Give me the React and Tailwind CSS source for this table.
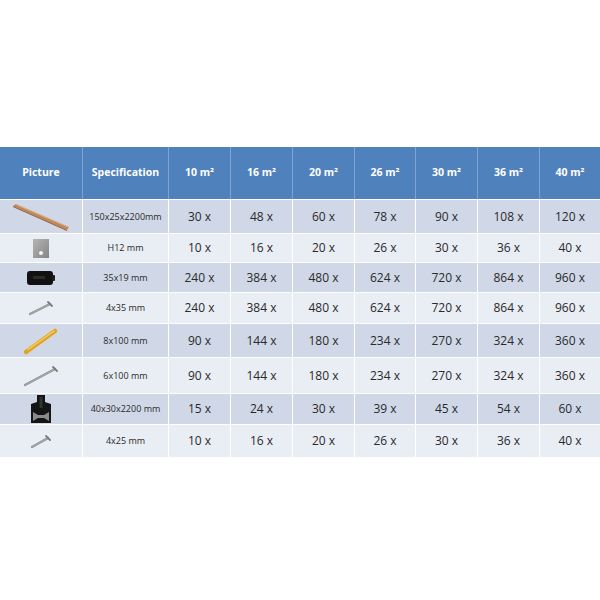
import React from "react";

const cols = ["10 m²", "16 m²", "20 m²", "26 m²", "30 m²", "36 m²", "40 m²"];

const Plank = () => (
  <svg width="58" height="28" viewBox="0 0 58 28">
    <polygon points="1,3 4,1 57,24 55,27" fill="#c28656" />
    <polygon points="4,1 57,24 57,25 4,2" fill="#deb088" />
    <polygon points="1,3 55,27 55,28 1,4" fill="#8a5a33" />
  </svg>
);

const Bracket = () => (
  <svg width="18" height="21" viewBox="0 0 18 21">
    <defs>
      <linearGradient id="br" x1="0" y1="0" x2="1" y2="1">
        <stop offset="0" stopColor="#b5b5b5" />
        <stop offset="1" stopColor="#858585" />
      </linearGradient>
    </defs>
    <rect x="1" y="1" width="16" height="19" fill="url(#br)" />
    <circle cx="9" cy="15" r="2" fill="#f4f4f4" />
  </svg>
);

const Clip = () => (
  <svg width="30" height="16" viewBox="0 0 30 16">
    <rect x="1" y="1" width="26" height="14" rx="3" fill="#111" />
    <rect x="26" y="5" width="3" height="6" rx="1" fill="#1d1d1d" />
    <rect x="7" y="6" width="12" height="3" fill="#2a2a2a" />
  </svg>
);

const Screw = ({ w = 24, h = 14 }) => (
  <svg width={w + 4} height={h + 4} viewBox={`0 0 ${w + 4} ${h + 4}`}>
    <line x1="2" y1={h + 2} x2={w} y2="4" stroke="#8c8c8c" strokeWidth="2.2" strokeLinecap="round" />
    <line x1="2" y1={h + 2} x2={w} y2="4" stroke="#b8b8b8" strokeWidth="0.8" strokeLinecap="round" />
    <line x1={w - 2} y1="2" x2={w + 2} y2="6" stroke="#7a7a7a" strokeWidth="1.8" strokeLinecap="round" />
  </svg>
);

const Anchor = () => (
  <svg width="38" height="30" viewBox="0 0 38 30">
    <line x1="4" y1="26" x2="33" y2="5" stroke="#e2a424" strokeWidth="4.5" strokeLinecap="round" />
    <line x1="6" y1="23.5" x2="32" y2="5" stroke="#f7cf66" strokeWidth="1.4" strokeLinecap="round" />
  </svg>
);

const Profile = () => (
  <svg width="22" height="30" viewBox="0 0 22 30">
    <path d="M7 1 L15 1 L15 8 L21 10 L21 29 L1 29 L1 10 L7 8 Z" fill="#151515" />
    <path d="M3 18 L8 21 L14 21 L19 18 L19 27 L14 24 L8 24 L3 27 Z" fill="#8a8a8a" />
    <path d="M9.5 3 L12.5 3 L12.5 14 L9.5 14 Z" fill="#333" />
  </svg>
);

const rows = [
  { h: "h-[34px]", dark: true, icon: <Plank />, spec: "150x25x2200mm", v: [30, 48, 60, 78, 90, 108, 120] },
  { h: "h-[29px]", dark: false, icon: <Bracket />, spec: "H12 mm", v: [10, 16, 20, 26, 30, 36, 40] },
  { h: "h-[30px]", dark: true, icon: <Clip />, spec: "35x19 mm", v: [240, 384, 480, 624, 720, 864, 960] },
  { h: "h-[31px]", dark: false, icon: <Screw w={22} h={12} />, spec: "4x35 mm", v: [240, 384, 480, 624, 720, 864, 960] },
  { h: "h-[34px]", dark: true, icon: <Anchor />, spec: "8x100 mm", v: [90, 144, 180, 234, 270, 324, 360] },
  { h: "h-[36px]", dark: false, icon: <Screw w={32} h={18} />, spec: "6x100 mm", v: [90, 144, 180, 234, 270, 324, 360] },
  { h: "h-[31px]", dark: true, icon: <Profile />, spec: "40x30x2200 mm", v: [15, 24, 30, 39, 45, 54, 60] },
  { h: "h-[33px]", dark: false, icon: <Screw w={18} h={11} />, spec: "4x25 mm", v: [10, 16, 20, 26, 30, 36, 40] },
];

const grid = "grid grid-cols-[83px_86px_62px_62px_62px_61px_62px_62px_60px]";

export default function App() {
  return (
    <div className="w-[600px] h-[600px] bg-white pt-[147px] font-['Open_Sans',sans-serif] overflow-hidden">
      {/* Header */}
      <div className={`${grid} h-[52px] bg-[#4f81bd] text-white text-[10.5px] font-bold`}>
        {["Picture", "Specification", ...cols].map((c, i) => (
          <div
            key={c}
            className={`flex items-center justify-center ${i < 8 ? "border-r border-[#7fa3d2]" : ""}`}
          >
            {c}
          </div>
        ))}
      </div>

      {/* Body */}
      {rows.map((r, ri) => (
        <div
          key={ri}
          className={`${grid} ${r.h} ${r.dark ? "bg-[#d0d8e8]" : "bg-[#e9edf4]"} border-t border-white text-[#2a2a2a]`}
        >
          <div className="flex items-center justify-center border-r border-white">{r.icon}</div>
          <div className="flex items-center justify-center border-r border-white text-[9px]">{r.spec}</div>
          {r.v.map((n, i) => (
            <div
              key={i}
              className={`flex items-center justify-center text-[12px] ${i < 6 ? "border-r border-white" : ""}`}
            >
              {n} x
            </div>
          ))}
        </div>
      ))}
    </div>
  );
}
